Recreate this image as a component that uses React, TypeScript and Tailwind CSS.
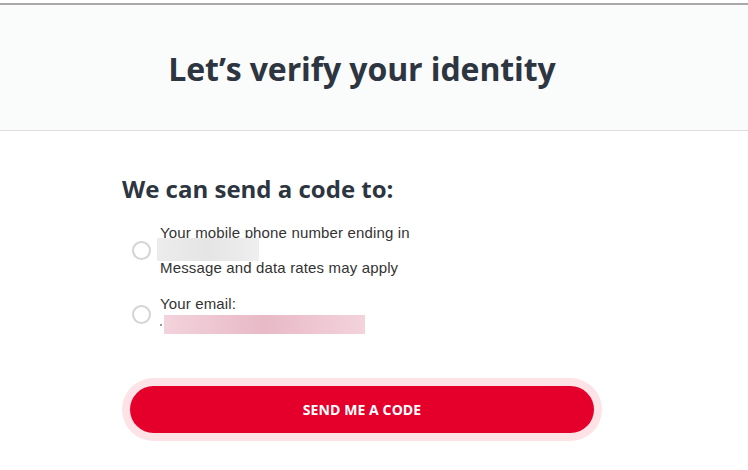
export default function App() {
  return (
    <div className="min-h-screen w-[748px] bg-white font-['Open_Sans',sans-serif]">
      {/* Header band */}
      <div className="mt-[3px] border-t-2 border-[#a9a9a9]" />
      <div className="flex h-[126px] items-center justify-center border-b border-[#dedede] bg-[#fafbfb]">
        <h1 className="-ml-[24px] mt-[2px] text-[32px] font-bold tracking-[-0.1px] text-[#2c3540]">
          Let’s verify your identity
        </h1>
      </div>

      {/* Body */}
      <div className="ml-[122px] w-[480px] pt-[43px]">
        <h2 className="text-[24px] font-bold leading-[30px] text-[#2c3540]">We can send a code to:</h2>

        <div className="mt-[20px] flex flex-col gap-[19px] font-['Liberation_Sans',Arial,sans-serif] text-[15px] tracking-[0.15px] text-[#333]">
          <label className="flex items-center">
            <span className="ml-[10px] h-[19px] w-[19px] shrink-0 rounded-full border-2 border-[#d4d4d4] bg-white" />
            <span className="ml-[9px] flex flex-col">
              <span className="leading-[17px]">Your mobile phone number ending in</span>
              <span className="-ml-[3px] mt-[-3px] h-[23px] w-[102px] bg-gradient-to-r from-[#ececec] via-[#e5e5e5] to-[#efefef]" />
              <span className="mt-[-2px] leading-[17px]">Message and data rates may apply</span>
            </span>
          </label>

          <label className="flex items-center">
            <span className="ml-[10px] h-[19px] w-[19px] shrink-0 rounded-full border-2 border-[#d4d4d4] bg-white" />
            <span className="ml-[9px] flex flex-col">
              <span className="leading-[17px]">Your email:</span>
              <span className="mt-[3px] flex h-[19px] items-center">
                <span className="mr-[2px] h-[2px] w-[2px] bg-[#999]" />
                <span className="h-[19px] w-[201px] bg-gradient-to-r from-[#f2d3dc] via-[#e8b9c6] to-[#f3d3dc]" />
              </span>
            </span>
          </label>
        </div>

        <div className="mt-[44px] rounded-full bg-[#fde2e6] p-[8px]">
          <button className="flex h-[47px] w-full items-center justify-center rounded-full bg-[#e4002b] text-[14px] font-bold tracking-[0.1px] text-white">
            SEND ME A CODE
          </button>
        </div>
      </div>
    </div>
  );
}
